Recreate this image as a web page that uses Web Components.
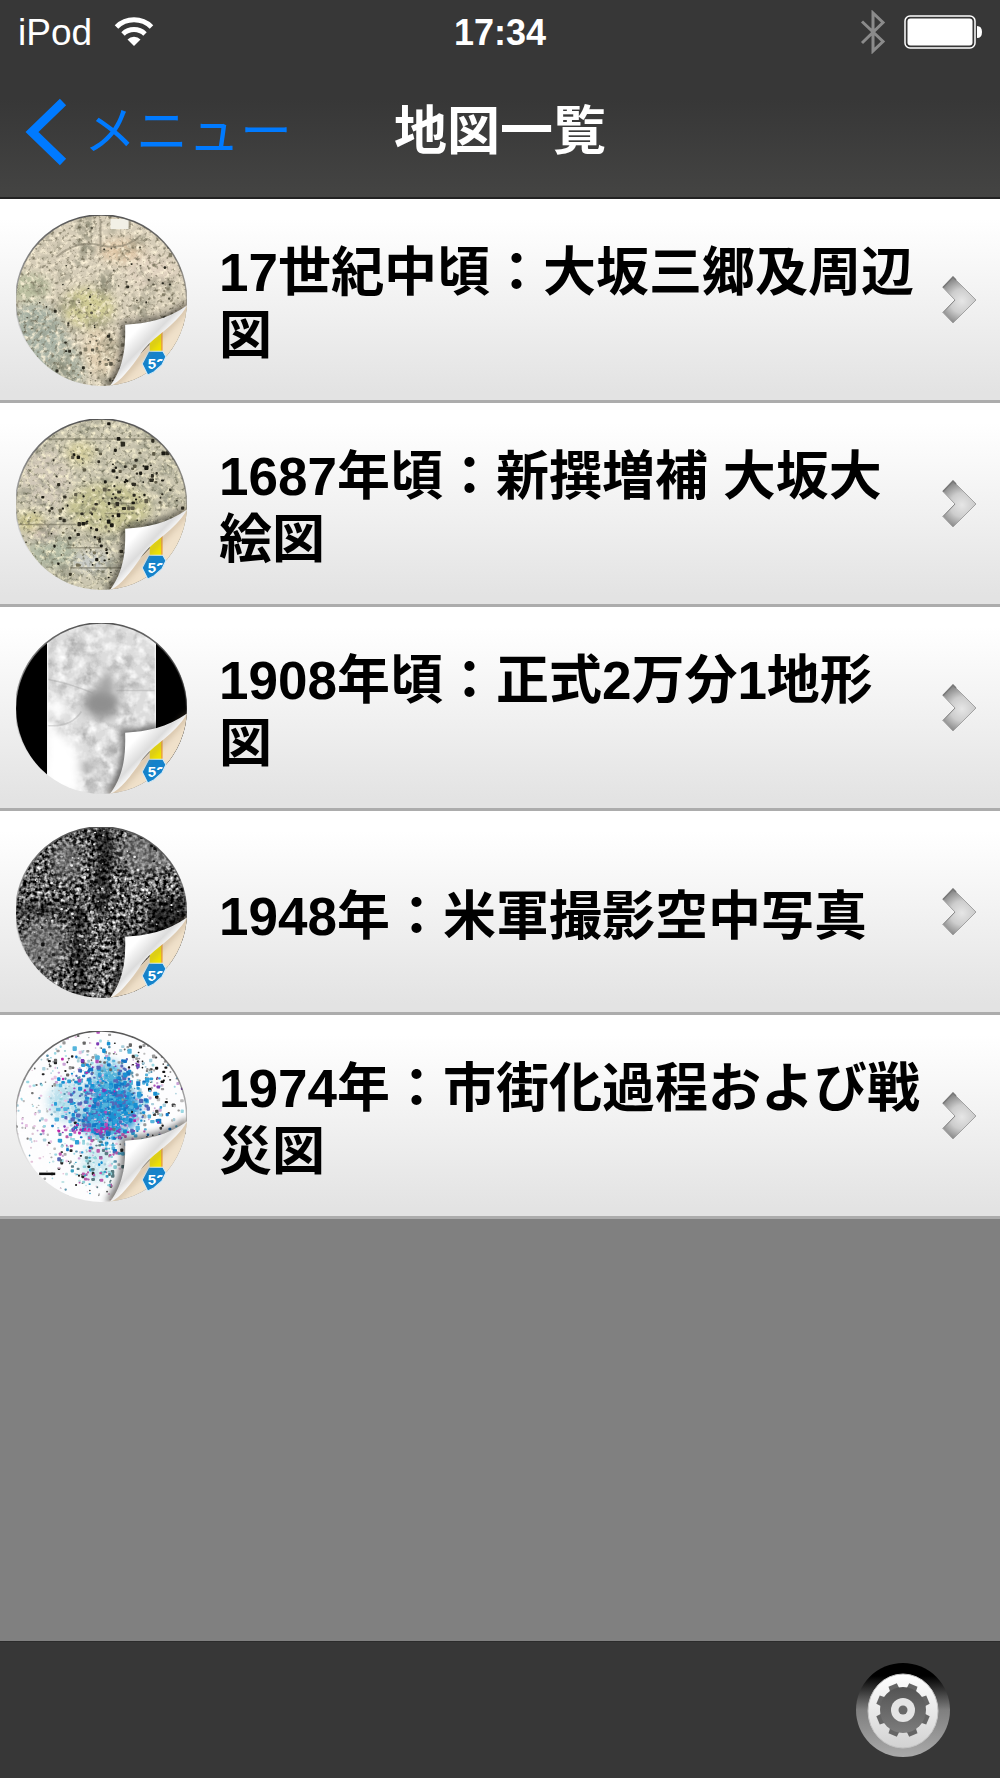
<!DOCTYPE html>
<html lang="ja">
<head>
<meta charset="utf-8">
<meta name="viewport" content="width=device-width, initial-scale=1">
<title>地図一覧</title>
<style>
  body {
    margin: 0;
    background: #808080;
    font-family: "Liberation Sans", "Noto Sans CJK JP", sans-serif;
  }
</style>
</head>
<body>

<app-screen>
  <status-bar slot="header" carrier="iPod" time="17:34"></status-bar>
  <nav-bar slot="header" back="メニュー">地図一覧</nav-bar>
  <map-row kind="sango">17世紀中頃：大坂三郷及周辺図</map-row>
  <map-row kind="ezu">1687年頃：新撰増補 大坂大絵図</map-row>
  <map-row kind="topo">1908年頃：正式2万分1地形図</map-row>
  <map-row kind="aerial">1948年：米軍撮影空中写真</map-row>
  <map-row kind="urban">1974年：市街化過程および戦災図</map-row>
  <tool-bar slot="footer"></tool-bar>
</app-screen>

<script>
(function () {
  // deterministic generator, so the thumbnails look the same on every load
  const random = (seed) => () => {
    seed = (seed * 1664525 + 1013904223) >>> 0;
    return seed / 4294967296;
  };

  // rect filled with turbulence; matrix turns the noise into colour/alpha
  const noise = (id, freq, seed, matrix, octaves = 3) => `
    <filter id="${id}" x="0" y="0" width="1" height="1" color-interpolation-filters="sRGB">
      <feTurbulence type="fractalNoise" baseFrequency="${freq}" numOctaves="${octaves}" seed="${seed}"/>
      <feColorMatrix values="${matrix}"/>
    </filter>
    <rect width="170" height="170" filter="url(#${id})"/>`;

  // constant colour, alpha taken from the noise
  const tint = (r, g, b, k, off) =>
    `0 0 0 0 ${r}  0 0 0 0 ${g}  0 0 0 0 ${b}  ${k} 0 0 0 ${off}`;

  // specks scattered round a centre, normally distributed
  const specks = (seed, count, cx, cy, sx, sy, size, colors) => {
    const rnd = random(seed);
    let out = '';
    for (let i = 0; i < count; i++) {
      const m = Math.sqrt(-2 * Math.log(rnd() + 1e-6)), a = rnd() * Math.PI * 2;
      const x = cx + m * Math.cos(a) * sx, y = cy + m * Math.sin(a) * sy;
      const s = size * (0.6 + rnd() * 0.8);
      const c = colors[Math.floor(rnd() * colors.length)];
      out += `<rect x="${x.toFixed(1)}" y="${y.toFixed(1)}" width="${s.toFixed(1)}" height="${(s * (0.7 + rnd() * 0.5)).toFixed(1)}" rx=".8" fill="${c}"/>`;
    }
    return out;
  };

  const INK = ['#2b2a20', '#5a5646', '#857f69'];

  const TEXTURES = {
    sango: () => `
      <rect width="170" height="170" fill="#d6cdb8"/>
      <g filter="url(#soft)">
        <ellipse cx="18" cy="130" rx="34" ry="42" fill="#a9b3a6"/>
        <ellipse cx="52" cy="152" rx="18" ry="22" fill="#adb4a4"/>
        <ellipse cx="12" cy="72" rx="22" ry="14" fill="#b9be9f"/>
        <ellipse cx="72" cy="92" rx="26" ry="20" fill="#cfca94"/>
        <ellipse cx="105" cy="36" rx="22" ry="12" fill="#e0c8a8"/>
        <ellipse cx="136" cy="56" rx="26" ry="18" fill="#e0d2bf"/>
        <ellipse cx="84" cy="136" rx="18" ry="24" fill="#e0cfb2"/>
      </g>
      ${noise('a', '.05', 4, tint(.50, .50, .42, 2, -1))}
      ${noise('b', '.2', 9, tint(1, .96, .86, 2.6, -1.2))}
      ${noise('c', '.26', 2, tint(.38, .36, .28, 2.4, -1.3))}
      <path d="M94 4h18v10H94z" fill="#f2f0e6"/>
      <path d="M84 4v34M113 6v8M40 42q20-18 44-12t40-10" fill="none" stroke="#77715f" stroke-width="2" opacity=".5"/>
      ${specks(5, 56, 78, 90, 34, 38, 2.2, INK)}
      ${specks(8, 34, 88, 140, 16, 18, 2.6, INK)}
      ${specks(3, 16, 150, 60, 9, 22, 2.6, INK)}`,

    ezu: () => `
      <rect width="170" height="170" fill="#cbc6b0"/>
      <g filter="url(#soft)">
        <ellipse cx="30" cy="60" rx="24" ry="30" fill="#d1c8b8"/>
        <ellipse cx="92" cy="88" rx="42" ry="24" fill="#c6c392"/>
        <ellipse cx="64" cy="34" rx="14" ry="12" fill="#d6cf9f"/>
        <ellipse cx="36" cy="132" rx="24" ry="16" fill="#b1baa4"/>
        <ellipse cx="14" cy="102" rx="14" ry="8" fill="#cfc888"/>
        <ellipse cx="76" cy="142" rx="20" ry="10" fill="#c8cbc7"/>
        <ellipse cx="28" cy="114" rx="12" ry="8" fill="#d9c8bc"/>
      </g>
      ${noise('a', '.05 .08', 14, tint(.50, .51, .44, 2, -1))}
      ${noise('b', '.2', 21, tint(1, .97, .84, 2.6, -1.25))}
      ${noise('c', '.26', 7, tint(.36, .36, .28, 2.4, -1.3))}
      <path d="M0 105h60M54 148h60M50 128h36M92 84h30M88 94h22M20 20h120" fill="none" stroke="#5d5946" stroke-width="1.5" opacity=".45"/>
      ${specks(11, 90, 98, 72, 34, 34, 2.8, ['#1a1912', '#2e2c22', '#5d5946'])}
      ${specks(17, 56, 68, 122, 32, 26, 2.8, ['#1a1912', '#3d3a2b', '#757058'])}
      ${specks(29, 22, 132, 50, 18, 22, 3.2, ['#1a1912', '#2e2c22'])}`,

    topo: () => `
      <rect width="170" height="170" fill="#dcdcdc"/>
      ${noise('a', '.06', 3, tint(.62, .62, .62, 1.8, -.8), 5)}
      ${noise('b', '.1', 6, tint(1, 1, 1, 2.2, -.95))}
      <g filter="url(#soft)">
        <ellipse cx="85" cy="80" rx="18" ry="15" fill="#8f8f8f"/>
        <ellipse cx="90" cy="60" rx="8" ry="11" fill="#a6a6a6"/>
        <path d="M28 94L50 112L62 130L66 170H28z" fill="#fff"/>
        <ellipse cx="40" cy="84" rx="8" ry="10" fill="#fff"/>
        <ellipse cx="71" cy="143" rx="6" ry="5" fill="#8b8b8b"/>
      </g>
      <path d="M31 102q24 2 34-14M31 56q22 4 46 14M100 67h38" fill="none" stroke="#999" stroke-width="1.5" opacity=".35"/>
      <path d="M0 0h31v170H0zM139 0h31v170h-31z"/>
      <path d="M31.500 0v170M138.500 0v170" stroke="#fff" stroke-width="1"/>`,

    aerial: () => `
      <rect width="170" height="170" fill="#444"/>
      ${noise('a', '.28', 12, '2 0 0 0 -.64  2 0 0 0 -.64  2 0 0 0 -.64  0 0 0 0 1', 2)}
      <g filter="url(#soft)" opacity=".6">
        <path d="M78 0h18v86H78zM0 78h68v10H0zM132 70h38v44h-38zM56 86h14v84H56z"/>
        <ellipse cx="130" cy="26" rx="28" ry="20" fill="#888"/>
        <ellipse cx="50" cy="34" rx="14" ry="20" fill="#808080"/>
        <ellipse cx="28" cy="118" rx="22" ry="26" fill="#808080"/>
      </g>
      ${specks(47, 170, 85, 85, 50, 50, 2.6, ['#111', '#222', '#333'])}
      ${specks(41, 210, 84, 58, 42, 26, 2, ['#eee', '#bbb', '#999'])}
      ${specks(43, 130, 70, 130, 42, 24, 2, ['#ccc', '#999', '#888'])}`,

    urban: () => `
      <rect width="170" height="170" fill="#fdfdfe"/>
      <g filter="url(#soft)">
        <ellipse cx="90" cy="78" rx="33" ry="27" fill="#1f8fd0"/>
        <ellipse cx="92" cy="46" rx="15" ry="15" fill="#4db0d8"/>
        <ellipse cx="54" cy="70" rx="22" ry="20" fill="#b8dfec"/>
        <ellipse cx="80" cy="132" rx="15" ry="18" fill="#cde8ef"/>
      </g>
      ${noise('a', '.28', 8, tint(1, 1, 1, 2.4, -1.3))}
      ${specks(66, 110, 138, 54, 18, 30, 2.6, ['#111', '#444', '#999', '#bbb'])}
      ${specks(67, 120, 66, 24, 40, 14, 2.4, ['#222', '#666', '#999', '#a8cfd6'])}
      ${specks(68, 150, 84, 140, 44, 22, 2.2, ['#222', '#777', '#aaa', '#e5c3da', '#bfe2e4'])}
      ${specks(69, 50, 16, 80, 14, 40, 2, ['#777', '#bbb', '#ddc4d4'])}
      ${specks(62, 420, 80, 70, 40, 32, 2.4, ['#9ad7e2', '#c9a3d6', '#a9cfdc', '#e6c3e2', '#5b93ad'])}
      ${specks(61, 480, 89, 72, 21, 22, 3.2, ['#1790d2', '#2d9fd8', '#1577c4', '#54b4dc', '#5668b8'])}
      ${specks(63, 46, 84, 56, 34, 26, 2.6, ['#c025a8', '#b04fb9', '#7d3bb5'])}
      ${specks(64, 46, 76, 98, 24, 2, 2.4, ['#c025a8', '#c65fb9', '#8d3bb5'])}
      ${specks(65, 110, 80, 126, 16, 18, 2.6, ['#37a3c5', '#8ccfd8', '#ba5bab', '#5a7c82'])}
      <path d="M23 142h16" stroke="#111" stroke-width="2.500"/>`
  };

  class MapThumb extends HTMLElement {
    connectedCallback() {
      const texture = TEXTURES[this.getAttribute('kind')] || TEXTURES.topo;
      this.attachShadow({ mode: 'open' }).innerHTML = `
        <style>
          :host { display: block; flex: none; width: 171px; height: 171px; }
          svg { display: block; width: 100%; height: 100%; }
        </style>
        <svg viewBox="0 0 170 170" aria-hidden="true">
          <defs>
            <clipPath id="disc"><circle cx="85" cy="85" r="85"/></clipPath>
            <filter id="soft" x="-.3" y="-.3" width="1.6" height="1.6"><feGaussianBlur stdDeviation="5"/></filter>
            <filter id="shade" x="-.3" y="-.3" width="1.6" height="1.6"><feGaussianBlur stdDeviation="3"/></filter>
            <filter id="photo" x="0" y="0" width="1" height="1" color-interpolation-filters="sRGB"><feGaussianBlur stdDeviation=".6"/></filter>
            <linearGradient id="curl" gradientUnits="userSpaceOnUse" x1="109" y1="109" x2="136" y2="135">
              <stop offset=".3" stop-color="#fff"/>
              <stop offset=".72" stop-color="#dcdcdc"/>
              <stop offset=".9" stop-color="#f8f8f8"/>
              <stop offset="1" stop-color="#ccc"/>
            </linearGradient>
            <linearGradient id="rim" x2="0" y2="1">
              <stop stop-color="#555"/>
              <stop offset=".5" stop-color="#555" stop-opacity=".4"/>
              <stop offset=".8" stop-color="#555" stop-opacity="0"/>
            </linearGradient>
          </defs>
          <g clip-path="url(#disc)">
            <g filter="url(#photo)">${texture()}</g>
            <path d="M170 86C150 100 130 104 104 106C106 130 104 150 88 170H170z" opacity=".5" filter="url(#shade)"/>
            <path d="M170 90L93 170H170z" fill="#f0e1ca"/>
            <path d="M133 118H145V140H133z" fill="#f0e400"/>
            <path d="M145 112V140" stroke="#eda23c" stroke-width="1.500"/>
          </g>
          <path d="M125.500 148L132 135.500H146L149 141L145 149L137 156L131 159z" fill="#1583cb" stroke="#d5ebf8" stroke-width="1"/>
          <g clip-path="url(#disc)">
            <text x="131" y="153" font-family="Liberation Sans" font-weight="700" font-size="15" fill="#fff">52</text>
            <path d="M172 90L95 172" stroke="#9b8264" stroke-width="5" opacity=".4" filter="url(#shade)"/>
          </g>
          <path d="M170 90C150 104 130 108 108.500 109C109 130 108 150 93.500 170C104 166 114 152 124 138C136 120 158 112 170 90z" fill="url(#curl)"/>
          <path d="M93.500 169.500A85 85 0 1 1 169.500 90" fill="none" stroke="url(#rim)" stroke-width="1.500"/>
        </svg>`;
    }
  }

  class MapRow extends HTMLElement {
    connectedCallback() {
      const kind = this.getAttribute('kind');
      this.attachShadow({ mode: 'open' }).innerHTML = `
        <style>
          :host { display: block; }
          a {
            box-sizing: border-box;
            display: flex;
            align-items: center;
            min-height: 204px;
            padding: 1px 23px 0 16px;
            border-bottom: 3px solid #acacac;
            background: linear-gradient(#fff 10%, #e3e3e3 96%);
            color: #000;
            text-decoration: none;
          }
          .label {
            flex: 1;
            margin: 0 19px 0 32px;
            padding-top: 8px;
            font-size: 53px;
            font-weight: 700;
            line-height: 63px;
          }
          .chevron { flex: none; display: block; width: 35px; height: 48px; }
        </style>
        <a href="#${kind}">
          <map-thumb kind="${kind}"></map-thumb>
          <span class="label"><slot></slot></span>
          <svg class="chevron" viewBox="0 0 35 48" aria-hidden="true">
            <defs>
              <radialGradient id="g" gradientUnits="userSpaceOnUse" cx="20" cy="25" r="24">
                <stop stop-color="#e6e6e6"/>
                <stop offset=".5" stop-color="#cdcdcd"/>
                <stop offset="1" stop-color="#858585"/>
              </radialGradient>
            </defs>
            <path d="M11 1L34 24L11 47L1 36.500L13 24L1 11.500z" fill="url(#g)" stroke="#a2a2a2" stroke-width="1"/>
            <path d="M1 11.500L11 1L14 4" fill="none" stroke="#777" stroke-width="1.500"/>
            <path d="M1 36.500L13 24" fill="none" stroke="#8a8a8a" stroke-width="1"/>
          </svg>
        </a>`;
    }
  }

  class StatusBar extends HTMLElement {
    connectedCallback() {
      this.attachShadow({ mode: 'open' }).innerHTML = `
        <style>
          :host {
            display: grid;
            grid-template-columns: 1fr auto 1fr;
            align-items: center;
            height: 64px;
            padding: 0 18px;
            color: #fff;
            font-size: 37px;
            line-height: 40px;
          }
          .left, .right { display: flex; align-items: center; }
          .left { gap: 22px; }
          .right { justify-content: flex-end; gap: 18px; }
          .left span, .time { padding-top: 2px; }
          .time { font-weight: 700; font-size: 36px; }
          svg { display: block; flex: none; }
        </style>
        <span class="left">
          <span>${this.getAttribute('carrier')}</span>
          <svg width="40" height="30" viewBox="0 0 40 30" role="img" aria-label="Wi-Fi">
            <path d="M2.500 10A25 25 0 0 1 37.500 10" fill="none" stroke="#fff" stroke-width="5"/>
            <path d="M9 17A16 16 0 0 1 31 17" fill="none" stroke="#fff" stroke-width="5"/>
            <path d="M20 29L13.500 22.500A9 9 0 0 1 26.500 22.500z" fill="#fff"/>
          </svg>
        </span>
        <span class="time">${this.getAttribute('time')}</span>
        <span class="right">
          <svg width="26" height="44" viewBox="0 0 26 44" role="img" aria-label="Bluetooth">
            <path d="M2 11.500L23 31.500L13 41V3L23 12.500L2 33" fill="none" stroke="#8b8b8b" stroke-width="3"/>
          </svg>
          <svg width="78" height="34" viewBox="0 0 78 34" role="img" aria-label="Battery">
            <rect x="1" y="1" width="70" height="32" rx="5" fill="none" stroke="#fff" stroke-width="1.500"/>
            <rect x="3.500" y="3.500" width="65" height="27" rx="3" fill="#fff"/>
            <path d="M73 11q5 0 5 6t-5 6z" fill="#fff"/>
          </svg>
        </span>`;
    }
  }

  class NavBar extends HTMLElement {
    connectedCallback() {
      this.attachShadow({ mode: 'open' }).innerHTML = `
        <style>
          :host {
            box-sizing: border-box;
            display: grid;
            grid-template-columns: 1fr auto 1fr;
            align-items: center;
            height: 133px;
            padding: 3px 24px 0;
            color: #fff;
          }
          a {
            display: flex;
            align-items: center;
            gap: 16px;
            color: #007aff;
            font-size: 52px;
            font-weight: 400;
            line-height: 60px;
            text-decoration: none;
          }
          svg { display: block; flex: none; }
          h1 {
            margin: 0;
            font-size: 53px;
            font-weight: 700;
            line-height: 60px;
          }
        </style>
        <a href="#menu">
          <svg width="44" height="68" viewBox="0 0 44 68" aria-hidden="true">
            <path d="M39 4L8 34L39 64" fill="none" stroke="#007aff" stroke-width="9"/>
          </svg>
          <span>${this.getAttribute('back')}</span>
        </a>
        <h1><slot></slot></h1>`;
    }
  }

  class ToolBar extends HTMLElement {
    connectedCallback() {
      // eight-toothed gear, drawn round 0,0
      const teeth = Array.from({ length: 8 }, (_, i) =>
        `<path d="M-5 -20L-4.500 -27H4.500L5 -20z" transform="rotate(${i * 45 + 22.5})"/>`).join('');
      this.attachShadow({ mode: 'open' }).innerHTML = `
        <style>
          :host {
            box-sizing: border-box;
            display: flex;
            align-items: center;
            justify-content: flex-end;
            height: 137px;
            padding: 0 49px;
            border-top: 1px solid #2c2c2c;
            background: #373737;
          }
          button { padding: 0; border: 0; background: none; border-radius: 50%; cursor: pointer; }
          svg { display: block; }
        </style>
        <button type="button" aria-label="設定">
          <svg width="96" height="96" viewBox="-48 -48 96 96" aria-hidden="true">
            <defs>
              <linearGradient id="ring" x2="0" y2="1">
                <stop offset=".14" stop-color="#000"/>
                <stop offset=".5" stop-color="#7f7f7f"/>
                <stop offset="1" stop-color="#aaa"/>
              </linearGradient>
              <linearGradient id="face" x2="0" y2="1">
                <stop stop-color="#fff"/>
                <stop offset="1" stop-color="#d2d2d2"/>
              </linearGradient>
              <linearGradient id="cog" gradientUnits="userSpaceOnUse" x1="0" y1="-27" x2="0" y2="27">
                <stop stop-color="#505050"/>
                <stop offset="1" stop-color="#808080"/>
              </linearGradient>
            </defs>
            <circle r="47" fill="url(#ring)"/>
            <ellipse cy="1" rx="35" ry="37" fill="url(#face)" stroke="#c4c4c4" stroke-width="1"/>
            <g fill="#656565">${teeth}</g>
            <circle r="23" fill="url(#cog)"/>
            <circle r="12" fill="#e4e4e4"/>
            <circle r="4.500" fill="#686868"/>
          </svg>
        </button>`;
    }
  }

  class AppScreen extends HTMLElement {
    connectedCallback() {
      this.attachShadow({ mode: 'open' }).innerHTML = `
        <style>
          :host { display: flex; flex-direction: column; min-height: 100vh; }
          header {
            border-bottom: 2px solid #222;
            background: linear-gradient(#373737 50%, #444443);
          }
          main { flex: 1; background: #808080; }
        </style>
        <header><slot name="header"></slot></header>
        <main><slot></slot></main>
        <footer><slot name="footer"></slot></footer>`;
    }
  }

  customElements.define('map-thumb', MapThumb);
  customElements.define('map-row', MapRow);
  customElements.define('status-bar', StatusBar);
  customElements.define('nav-bar', NavBar);
  customElements.define('tool-bar', ToolBar);
  customElements.define('app-screen', AppScreen);
})();
</script>
</body>
</html>
